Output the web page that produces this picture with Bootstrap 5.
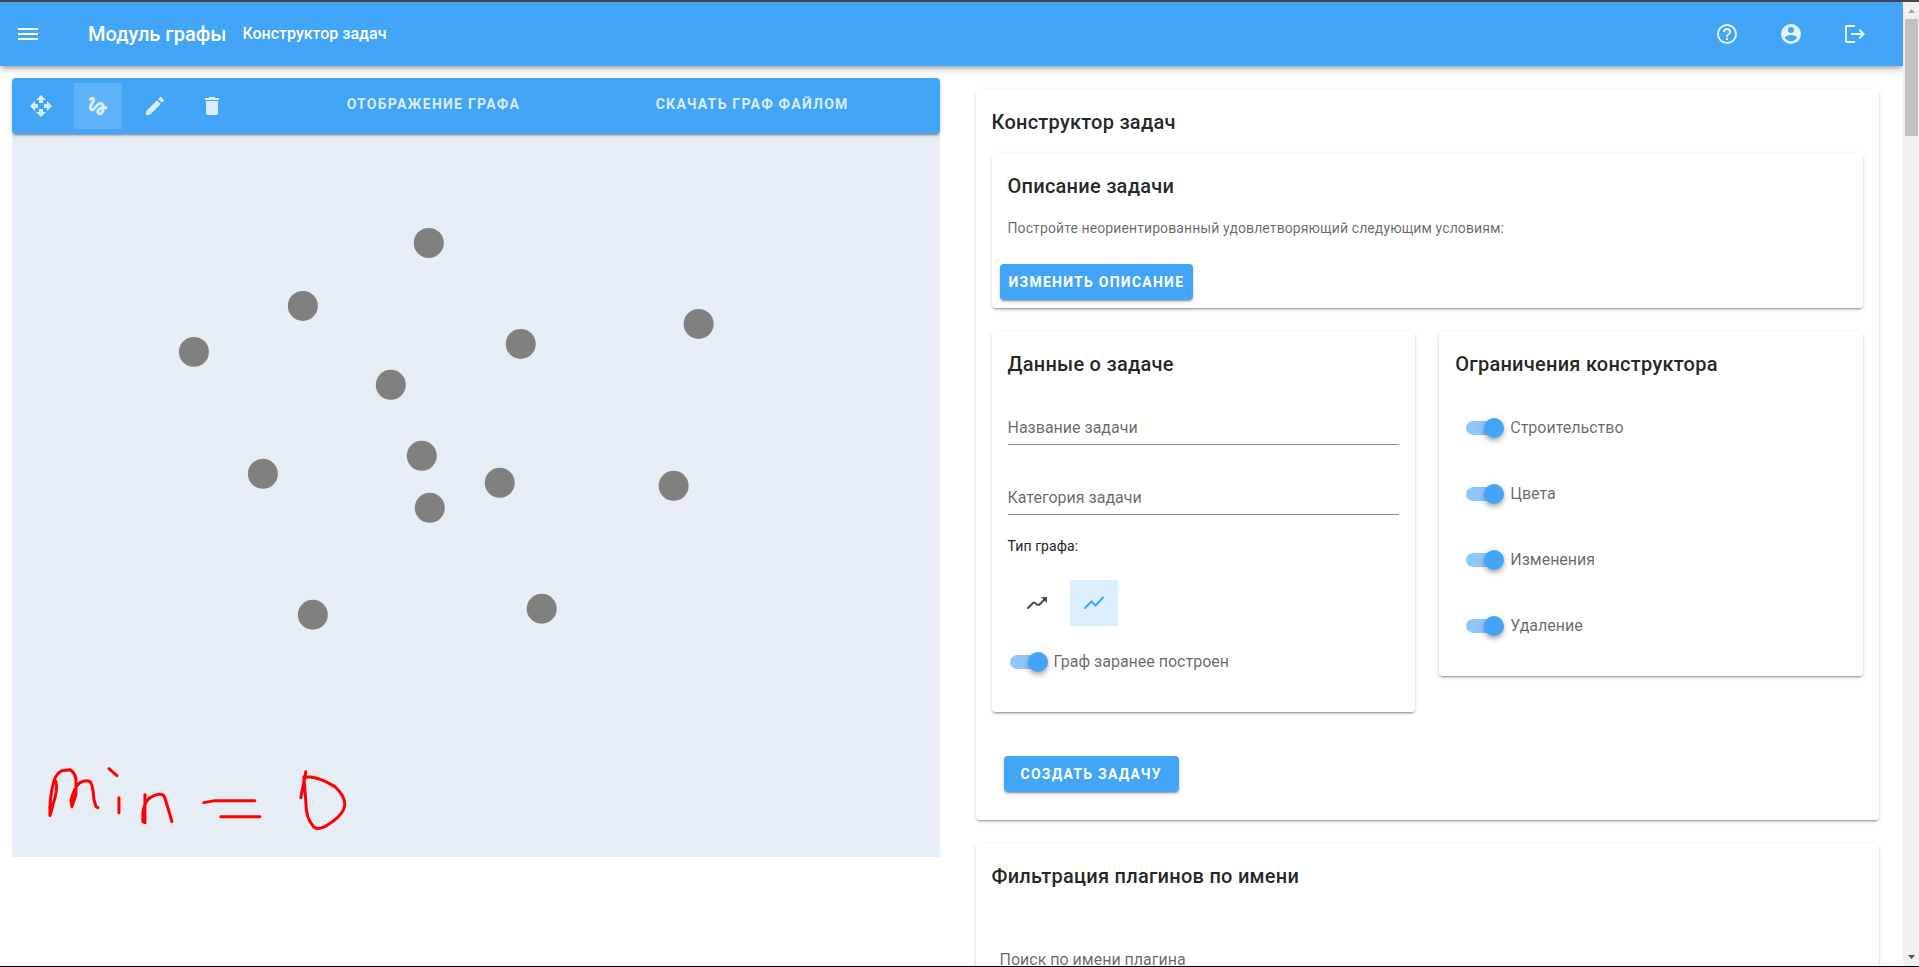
<!DOCTYPE html>
<html lang="ru">
<head>
<meta charset="utf-8">
<meta name="viewport" content="width=device-width, initial-scale=1">
<title>Модуль графы</title>
<link href="https://cdn.jsdelivr.net/npm/bootstrap@5.3.0/dist/css/bootstrap.min.css" rel="stylesheet">
<style>
:root { --main: #42a5f7; }
body { font-family: Roboto, "Noto Sans", sans-serif; font-size: 16px; color: rgba(0,0,0,.87); border-top: 2px solid #45464f; border-bottom: 1px solid #000; }
.app-header { min-height: 64px; background: var(--main); color: #fff; box-shadow: 0 2px 4px -1px rgba(0,0,0,.2), 0 4px 5px rgba(0,0,0,.14), 0 1px 10px rgba(0,0,0,.12); position: relative; }
.header-title { font-size: 20px; line-height: 24px; font-weight: 500; margin-left: 36px; }
.header-link { font-size: 16px; line-height: 24px; font-weight: 500; color: #fff; text-decoration: none; }
.header-btn { width: 48px; height: 48px; color: #fff; }
.header-btn.soft { color: #e5f3fe; }
.icon-24 { width: 24px; height: 24px; fill: currentColor; display: block; }
.plate { background: #fff; border-radius: 4px; box-shadow: 0 3px 1px -2px rgba(0,0,0,.2), 0 2px 2px rgba(0,0,0,.14), 0 1px 5px rgba(0,0,0,.12); }
.plate-title { font-size: 20px; line-height: 32px; font-weight: 500; letter-spacing: .0125em; padding: 16px; margin: 0; }
.plate-text { font-size: 14px; line-height: 20px; letter-spacing: .0071em; color: rgba(0,0,0,.6); padding: 0 16px 18px; margin: 0; }
.tool-bar { height: 56px; background: var(--main); border-radius: 4px; color: #d9edfd; padding: 0 28px 0 5px; position: relative; box-shadow: 0 3px 1px -2px rgba(0,0,0,.2), 0 2px 2px rgba(0,0,0,.14), 0 1px 5px rgba(0,0,0,.12); }
.tool-group { column-gap: 9px; }
.tool-bar .tool-group { margin-right: 38px; }
.tool-btn { width: 48px; height: 46px; border: 0; padding: 0; background: transparent; color: inherit; }
.tool-btn.on { background: rgba(255,255,255,.15); }
.type-btn { color: rgba(0,0,0,.7); }
.type-btn.on { color: var(--main); background: #ddeffe; }
.caps { font-size: 14px; line-height: 20px; font-weight: 700; letter-spacing: .0893em; text-transform: uppercase; border: 0; padding: 0; }
.tool-menu { background: transparent; color: inherit; }
.btn-main { background: var(--main); color: #fff; height: 36px; padding: 0 9px; border-radius: 4px; box-shadow: 0 3px 1px -2px rgba(0,0,0,.2), 0 2px 2px rgba(0,0,0,.14), 0 1px 5px rgba(0,0,0,.12); }
.btn-wide { padding: 0 17px; }
.graph { background: #e6edf5; display: block; width: 100%; height: 723px; }
.line-input { height: 32px; width: 100%; border: 0; border-bottom: 1px solid #8c8c8c; padding: 0 0 2px; outline: 0; background: transparent; font-size: 16px; color: inherit; }
.line-input::placeholder { color: rgba(0,0,0,.6); opacity: 1; }
.field { height: 70px; padding-top: 17px; }
.toggle { display: flex; align-items: center; gap: 6px; color: rgba(0,0,0,.6); line-height: 24px; height: 24px; }
.toggle input { appearance: none; width: 38px; height: 20px; margin: 0; position: relative; flex: none; }
.toggle input::before { content: ""; position: absolute; inset: 3px 2px 3px 0; border-radius: 7px; background: #8ec9fa; }
.toggle input::after { content: ""; position: absolute; right: 0; top: 0; width: 20px; height: 20px; border-radius: 50%; background: var(--main); box-shadow: 0 2px 4px -1px rgba(0,0,0,.2), 0 4px 5px rgba(0,0,0,.14), 0 1px 10px rgba(0,0,0,.12); }
.task-data { padding: 0 16px 38px; }
.task-data .toggle { padding-left: 2px; }
.type-group { padding-left: 5px; }
.limits { padding: 20px 27px 38px; gap: 42px; }
.create-row { padding: 44px 28px 28px; }
.search-row { padding: 37px 24px 40px; }
.scroll-track { width: 16px; background: #f0f0f0; flex: none; }
.scroll-track svg { width: 16px; height: 17px; display: block; }
.scroll-thumb { width: 13px; height: 117px; background: #c1c1c1; margin-left: 2px; }
</style>
</head>
<body class="vh-100 overflow-hidden d-flex">
<div class="flex-grow-1 overflow-hidden">
  <header class="app-header d-flex align-items-center z-1">
    <button type="button" class="header-btn btn border-0 p-0 ms-1 d-flex align-items-center justify-content-center" aria-label="Меню"><svg class="icon-24" viewBox="0 0 24 24"><path d="M2 6h20v2H2zM2 11h20v2H2zM2 16h20v2H2z"/></svg></button>
    <div class="header-title me-3">Модуль графы</div>
    <a class="header-link" href="#">Конструктор задач</a>
    <div class="ms-auto d-flex gap-3 me-4">
      <button type="button" class="header-btn soft btn border-0 p-0 d-flex align-items-center justify-content-center" aria-label="Помощь"><svg class="icon-24" viewBox="0 0 24 24"><path d="M11,18H13V16H11V18M12,2A10,10 0 0,0 2,12A10,10 0 0,0 12,22A10,10 0 0,0 22,12A10,10 0 0,0 12,2M12,20C7.59,20 4,16.41 4,12C4,7.59 7.59,4 12,4C16.41,4 20,7.59 20,12C20,16.41 16.41,20 12,20M12,6A4,4 0 0,0 8,10H10A2,2 0 0,1 12,8A2,2 0 0,1 14,10C14,12 11,11.75 11,15H13C13,12.75 16,12.5 16,10A4,4 0 0,0 12,6Z"/></svg></button>
      <button type="button" class="header-btn soft btn border-0 p-0 d-flex align-items-center justify-content-center" aria-label="Профиль"><svg class="icon-24" viewBox="0 0 24 24"><path d="M12,19.2C9.5,19.2 7.29,17.92 6,16C6.03,14 10,12.9 12,12.9C14,12.9 17.97,14 18,16C16.71,17.92 14.5,19.2 12,19.2M12,5A3,3 0 0,1 15,8A3,3 0 0,1 12,11A3,3 0 0,1 9,8A3,3 0 0,1 12,5M12,2A10,10 0 0,0 2,12A10,10 0 0,0 12,22A10,10 0 0,0 22,12C22,6.47 17.5,2 12,2Z"/></svg></button>
      <button type="button" class="header-btn soft btn border-0 p-0 d-flex align-items-center justify-content-center" aria-label="Выход"><svg class="icon-24" viewBox="0 0 24 24"><path d="M17 7L15.59 8.41L18.17 11H8V13H18.17L15.59 15.58L17 17L22 12M4 5H12V3H4C2.9 3 2 3.9 2 5V19C2 20.1 2.9 21 4 21H12V19H4V5Z"/></svg></button>
    </div>
  </header>

  <main class="row g-0">
    <section class="col-6 px-2 pt-2">
      <div class="px-1 pt-1">
        <div class="tool-bar d-flex align-items-center">
          <div class="tool-group d-flex">
            <button type="button" class="tool-btn d-flex align-items-center justify-content-center" aria-label="Переместить"><svg class="icon-24" viewBox="0 0 24 24"><path d="M10 9h4V6h3l-5-5-5 5h3v3zm-1 1H6V7l-5 5 5 5v-3h3v-4zm14 2l-5-5v3h-3v4h3v3l5-5zm-9 3h-4v3H7l5 5 5-5h-3v-3z"/></svg></button>
            <button type="button" class="tool-btn on d-flex align-items-center justify-content-center" aria-label="Рисовать"><svg class="icon-24" viewBox="0 0 24 24"><path stroke="currentColor" stroke-width=".5" d="M4.59 6.89c.7-.71 1.4-1.35 1.71-1.22.5.2 0 1.03-.3 1.52-.25.42-2.86 3.89-2.86 6.31 0 1.28.48 2.34 1.34 2.98.75.56 1.74.73 2.64.46 1.07-.31 1.95-1.4 3.06-2.77 1.21-1.49 2.83-3.44 4.08-3.44 1.63 0 1.65 1.01 1.76 1.79-3.78.64-5.38 3.67-5.38 5.37 0 1.7 1.44 3.09 3.21 3.09 1.63 0 4.29-1.33 4.69-6.1H21v-2.5h-2.47c-.15-1.65-1.09-4.2-4.03-4.2-2.25 0-4.18 1.91-4.94 2.84-.58.73-2.06 2.48-2.29 2.72-.25.3-.68.84-1.11.84-.45 0-.72-.83-.36-1.92.35-1.09 1.4-2.86 1.85-3.52.78-1.14 1.3-1.92 1.3-3.28C8.95 3.69 7.31 3 6.44 3 5.12 3 3.97 4 3.72 4.25c-.36.36-.66.66-.88.93l1.75 1.71zm9.29 11.66c-.31 0-.74-.26-.74-.72 0-.6.73-2.2 2.87-2.76-.3 2.69-1.43 3.48-2.13 3.48z"/></svg></button>
            <button type="button" class="tool-btn d-flex align-items-center justify-content-center" aria-label="Изменить"><svg class="icon-24" viewBox="0 0 24 24"><path d="M20.71,7.04C21.1,6.65 21.1,6 20.71,5.63L18.37,3.29C18,2.9 17.35,2.9 16.96,3.29L15.12,5.12L18.87,8.87M3,17.25V21H6.75L17.81,9.93L14.06,6.18L3,17.25Z"/></svg></button>
            <button type="button" class="tool-btn d-flex align-items-center justify-content-center" aria-label="Удалить"><svg class="icon-24" viewBox="0 0 24 24"><path d="M19,4H15.5L14.5,3H9.5L8.5,4H5V6H19M6,19A2,2 0 0,0 8,21H16A2,2 0 0,0 18,19V7H6V19Z"/></svg></button>
          </div>
          <button type="button" class="caps tool-menu w-50 pb-1">Отображение графа</button>
          <button type="button" class="caps tool-menu w-50 pb-1">Скачать граф файлом</button>
        </div>
        <svg class="graph" viewBox="12 134 928 723" preserveAspectRatio="xMinYMin meet" role="img" aria-label="Граф">
          <g fill="#808080">
            <circle cx="429" cy="243" r="15"/><circle cx="303" cy="306" r="15"/><circle cx="194" cy="352" r="15"/><circle cx="699" cy="324" r="15"/><circle cx="521" cy="344" r="15"/><circle cx="391" cy="385" r="15"/><circle cx="422" cy="456" r="15"/><circle cx="263" cy="474" r="15"/><circle cx="500" cy="483" r="15"/><circle cx="674" cy="486" r="15"/><circle cx="430" cy="508" r="15"/><circle cx="313" cy="615" r="15"/><circle cx="542" cy="609" r="15"/>
          </g>
          <g fill="none" stroke="#f00" stroke-width="3" stroke-linecap="round" stroke-linejoin="round">
            <path d="M56 782Q58 790 53 805L50 816Q49 800 54 781Q57 773 62 771L70 770Q77 774 76 785V795L72 807L71 801Q74 788 80 783Q86 780 90 782Q93 785 94 800L96 807L98 808"/>
            <path d="M109 769L117 776M119 798V813"/>
            <path d="M145 795V823L143 822V812Q145 799 154 796Q161 793 164 796Q166 801 172 822"/>
            <path d="M204 803L215 801H255M221 817H260"/>
            <path d="M306 772L301 798M304 777Q317 777 326 782L335 787Q345 796 345 805Q344 816 325 827Q316 831 313 826Q306 818 306 802L304 777"/>
          </g>
        </svg>
      </div>
    </section>

    <section class="col-6 p-4">
      <div class="plate">
        <h2 class="plate-title">Конструктор задач</h2>
        <div class="px-3">
          <div class="plate mb-4">
            <h3 class="plate-title">Описание задачи</h3>
            <p class="plate-text">Постройте неориентированный удовлетворяющий следующим условиям:</p>
            <div class="p-2"><button type="button" class="caps btn-main">Изменить описание</button></div>
          </div>
          <div class="row align-items-start">
            <div class="col-6">
              <div class="plate">
                <h3 class="plate-title">Данные о задаче</h3>
                <div class="task-data">
                  <div class="field"><input class="line-input" type="text" placeholder="Название задачи" aria-label="Название задачи"></div>
                  <div class="field"><input class="line-input" type="text" placeholder="Категория задачи" aria-label="Категория задачи"></div>
                  <p class="plate-text px-0 pb-0 text-dark">Тип графа:</p>
                  <div class="tool-group type-group d-flex mt-4 pb-4">
                    <button type="button" class="tool-btn type-btn d-flex align-items-center justify-content-center" aria-label="Ориентированный"><svg class="icon-24" viewBox="0 0 24 24"><path d="M3 17L8 12Q9 11 10 12L12 13.500Q13.500 14.500 15 13L19 9" fill="none" stroke="currentColor" stroke-width="2" stroke-linecap="round"/><path d="M16 6H22V12L20 10L18 8Z"/></svg></button>
                    <button type="button" class="tool-btn type-btn on d-flex align-items-center justify-content-center" aria-label="Неориентированный"><svg class="icon-24" viewBox="0 0 24 24"><path d="M3 17L9.500 10.500L13.500 14.500L21 6.500" fill="none" stroke="currentColor" stroke-width="2" stroke-linecap="round"/></svg></button>
                  </div>
                  <label class="toggle"><input type="checkbox" role="switch" checked>Граф заранее построен</label>
                </div>
              </div>
            </div>
            <div class="col-6">
              <div class="plate">
                <h3 class="plate-title">Ограничения конструктора</h3>
                <div class="limits d-flex flex-column">
                  <label class="toggle"><input type="checkbox" role="switch" checked>Строительство</label>
                  <label class="toggle"><input type="checkbox" role="switch" checked>Цвета</label>
                  <label class="toggle"><input type="checkbox" role="switch" checked>Изменения</label>
                  <label class="toggle"><input type="checkbox" role="switch" checked>Удаление</label>
                </div>
              </div>
            </div>
          </div>
        </div>
        <div class="create-row"><button type="button" class="caps btn-main btn-wide">Создать задачу</button></div>
      </div>
      <div class="plate mt-4">
        <h2 class="plate-title">Фильтрация плагинов по имени</h2>
        <div class="search-row"><input class="line-input" type="text" placeholder="Поиск по имени плагина" aria-label="Поиск по имени плагина"></div>
      </div>
    </section>
  </main>
</div>
<div class="scroll-track d-flex flex-column" aria-hidden="true">
  <svg viewBox="0 0 16 17"><path d="M5 11L8.500 7L12 11Z" fill="#a3a3a3"/></svg>
  <div class="scroll-thumb"></div>
  <svg class="mt-auto" viewBox="0 0 16 17"><path d="M5 6H12L8.500 10Z" fill="#505050"/></svg>
</div>
<script src="https://cdn.jsdelivr.net/npm/bootstrap@5.3.0/dist/js/bootstrap.bundle.min.js"></script>
</body>
</html>
